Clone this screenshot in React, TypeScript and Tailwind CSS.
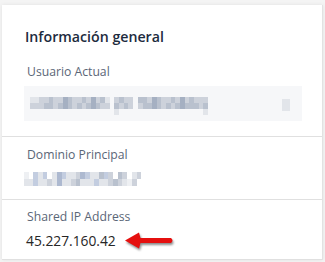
import React from 'react';

const palette: Record<string, string> = {
  a: '#e2e5ea',
  b: '#cdd2db',
  c: '#b9c1ce',
  d: '#a5b0c2',
  e: '#eef0f3',
  f: '#c3cde0',
  g: '#adb9d0',
  '.': 'transparent',
};

// pixelated (redacted) text
function Mosaic({ rows, cell = 5, h = 6 }: { rows: string[]; cell?: number; h?: number }) {
  return (
    <div className="flex flex-col" aria-hidden>
      {rows.map((row, i) => (
        <div key={i} className="flex">
          {row.split('').map((ch, j) => (
            <span key={j} style={{ width: cell, height: h, background: palette[ch] }} />
          ))}
        </div>
      ))}
    </div>
  );
}

function Arrow() {
  return (
    <svg width="52" height="20" viewBox="0 0 52 20" className="drop-shadow-[1px_2px_1px_rgba(0,0,0,0.45)]">
      <path d="M1 9.5 L15 1.5 L16.5 7 L47 7 Q50 9.5 47 12 L16.5 12 L15 17.5 Z" fill="#e5100f" />
    </svg>
  );
}

export default function App() {
  const user = [
    'aabbcbbdcbbcbdbca.bcbb.ccbdcbbcbdbcbbb',
    'bbbccbcdcbcbcdcbb.cbcb.bccdcbcbcdcccbc',
    '..................a..................a',
  ];
  const domain = [
    'e.faf.agfaabgfaacfb.cb.ab',
    'aafaabagaabcaaafaabcbaeb',
  ];

  return (
    <div className="min-h-[262px] w-[325px] bg-[#f4f4f4] pt-[5px] font-['Open_Sans',sans-serif] overflow-hidden">
      <div className="ml-[2px] w-[321px] bg-white border-r border-[#e2e2e2] shadow-[0_0_4px_rgba(0,0,0,0.08)]">
        <div className="px-[23px] pt-[22px]">
          <h2 className="text-[14.2px] leading-[20px] font-semibold text-[#1d2b3e]">Información general</h2>
        </div>

        <div className="pt-[16px] pb-[15px] border-b border-[#e0e0e0]">
          <div className="px-[25px] text-[12.2px] leading-[18px] text-[#5b6677]">Usuario Actual</div>
          <div className="mx-[22px] mt-[5px] h-[35px] w-[278px] bg-[#f6f7f9] flex items-start justify-between pl-[6px] pr-[12px] pt-[11px]">
            <Mosaic rows={user} cell={4.7} />
            <div className="mt-[2px]">
              <Mosaic rows={['aa', 'aa']} cell={4} />
            </div>
          </div>
        </div>

        <div className="pt-[9px] pb-[13px] border-b border-[#e0e0e0]">
          <div className="px-[25px] text-[12.2px] leading-[18px] text-[#5b6677]">Dominio Principal</div>
          <div className="px-[22px] mt-[8px]">
            <Mosaic rows={domain} cell={4.7} h={7} />
          </div>
        </div>

        <div className="pt-[8px] pb-[8px] border-b border-[#e0e0e0]">
          <div className="px-[25px] text-[12.2px] leading-[18px] text-[#5b6677]">Shared IP Address</div>
          <div className="px-[24px] mt-[5px] flex items-center gap-[8px]">
            <span className="text-[13.8px] leading-[20px] text-[#262626]">45.227.160.42</span>
            <Arrow />
          </div>
        </div>
      </div>
    </div>
  );
}
